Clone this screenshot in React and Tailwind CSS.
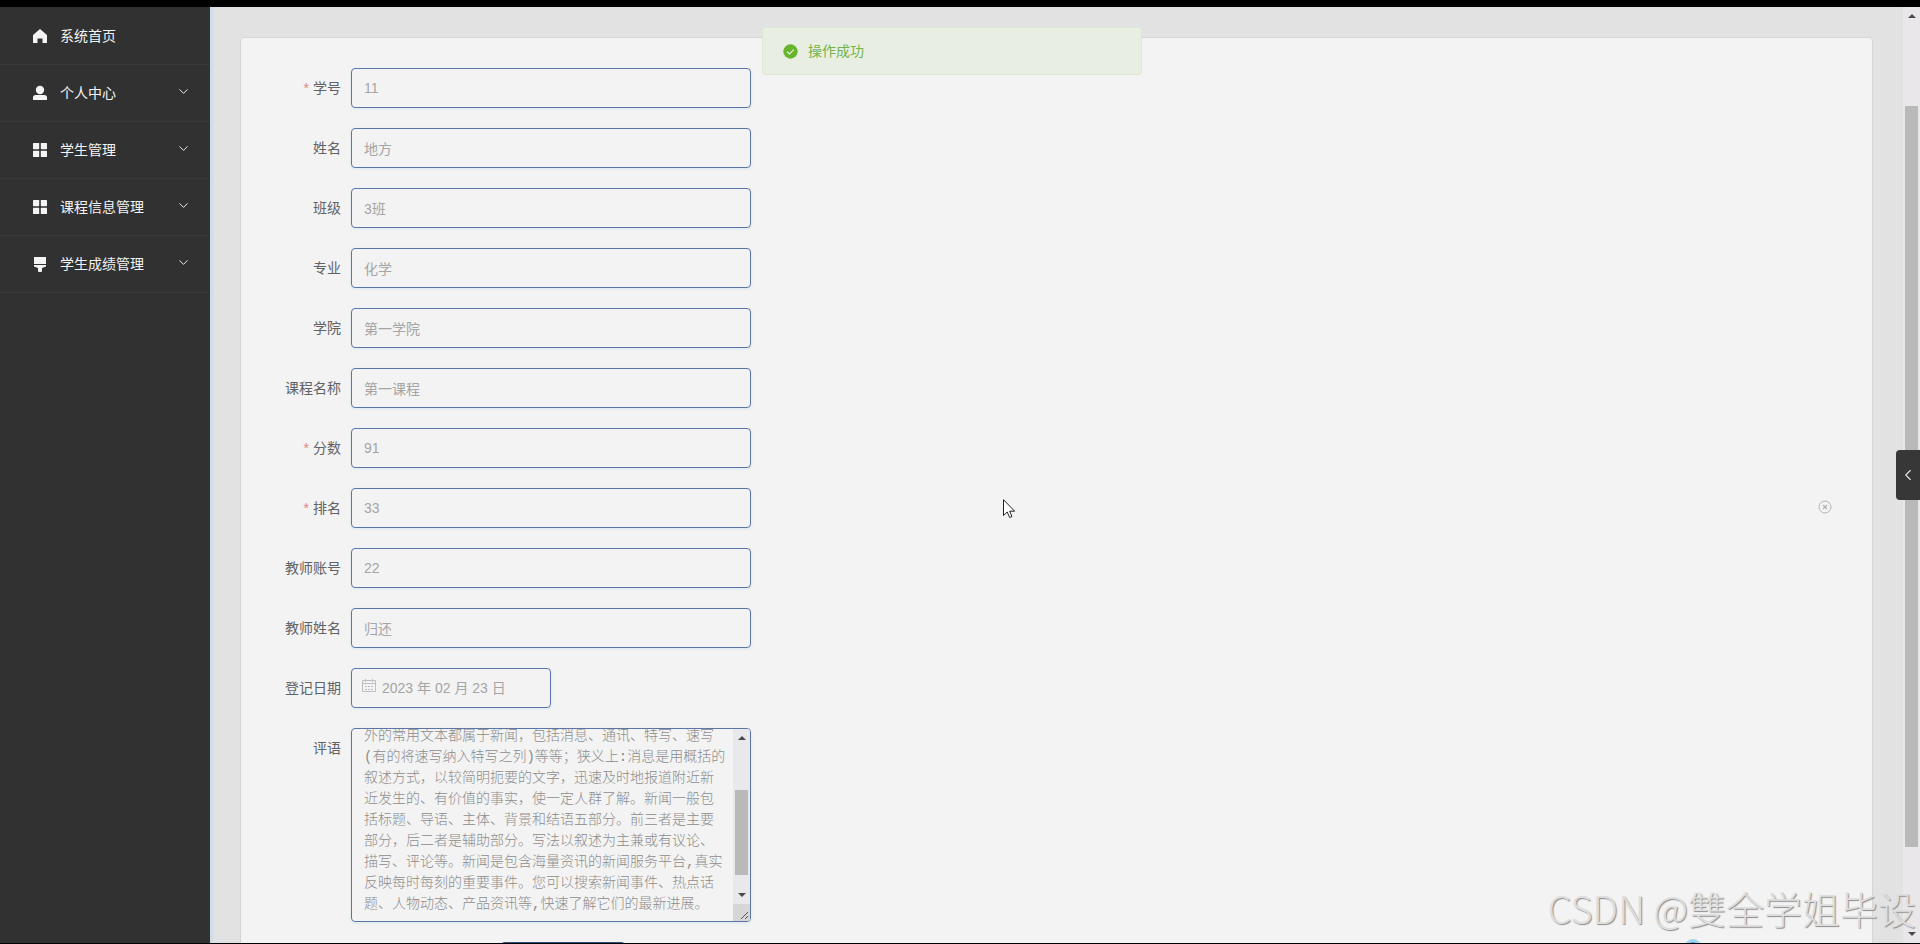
import React from "react";
import { FiChevronDown, FiChevronLeft } from "react-icons/fi";

const menu = [
  { nome: "系统首页", icon: "home" },
  { nome: "个人中心", icon: "user", sub: true },
  { nome: "学生管理", icon: "grid", sub: true },
  { nome: "课程信息管理", icon: "grid", sub: true },
  { nome: "学生成绩管理", icon: "brush", sub: true },
];

const fields = [
  { id: "xuehao", label: "学号", value: "11", required: true },
  { id: "xingming", label: "姓名", value: "地方" },
  { id: "banji", label: "班级", value: "3班" },
  { id: "zhuanye", label: "专业", value: "化学" },
  { id: "xueyuan", label: "学院", value: "第一学院" },
  { id: "kecheng", label: "课程名称", value: "第一课程" },
  { id: "fenshu", label: "分数", value: "91", required: true },
  { id: "paiming", label: "排名", value: "33", required: true },
  { id: "jiaoshizhanghao", label: "教师账号", value: "22" },
  { id: "jiaoshixingming", label: "教师姓名", value: "归还" },
];

const comment = [
  "外的常用文本都属于新闻，包括消息、通讯、特写、速写",
  "(有的将速写纳入特写之列)等等；狭义上:消息是用概括的",
  "叙述方式，以较简明扼要的文字，迅速及时地报道附近新",
  "近发生的、有价值的事实，使一定人群了解。新闻一般包",
  "括标题、导语、主体、背景和结语五部分。前三者是主要",
  "部分，后二者是辅助部分。写法以叙述为主兼或有议论、",
  "描写、评论等。新闻是包含海量资讯的新闻服务平台,真实",
  "反映每时每刻的重要事件。您可以搜索新闻事件、热点话",
  "题、人物动态、产品资讯等,快速了解它们的最新进展。",
].join("\n");

const icons = {
  home: <path d="M8 1 15 7v8h-4.500v-4.500h-5V15H1V7z" />,
  user: (
    <>
      <circle cx="8" cy="5" r="4.200" />
      <path d="M1 15v-2.500C1 11 2 10 3.500 10h9c1.500 0 2.500 1 2.500 2.500V15z" />
    </>
  ),
  grid: (
    <>
      <rect x="1" y="1" width="6.200" height="6.200" rx=".6" />
      <rect x="8.800" y="1" width="6.200" height="6.200" rx=".6" />
      <rect x="1" y="8.800" width="6.200" height="6.200" rx=".6" />
      <rect x="8.800" y="8.800" width="6.200" height="6.200" rx=".6" />
    </>
  ),
  brush: (
    <>
      <path d="M2 1h12v7H2z" />
      <path d="M2 9h12v1.500L10 12v3q0 1-1 1H7q-1 0-1-1v-3l-4-1.500z" />
    </>
  ),
};

const Arrow = ({ down }) => (
  <svg width="8" height="4" viewBox="0 0 8 4" fill="#4a4a4a" className="shrink-0">
    <path d={down ? "M0 0h8L4 4z" : "M4 0l4 4H0z"} />
  </svg>
);

const Sidebar = () => (
  <nav className="w-[210px] shrink-0 pt-px bg-[#323132] text-[#f4f4f4]">
    {menu.map((item) => (
      <a
        key={item.nome}
        href="#"
        className="flex items-center h-[57px] pl-8 pr-[19px] border-b border-[#39383b] text-sm"
      >
        <svg width="16" height="16" viewBox="0 0 16 16" fill="currentColor" className="mr-3">
          {icons[item.icon]}
        </svg>
        <span className="flex-1">{item.nome}</span>
        {item.sub && <FiChevronDown size={15} strokeWidth={1.5} className="mb-1" />}
      </a>
    ))}
  </nav>
);

const FormItem = ({ id, label, required, children }) => (
  <div className="flex mb-5">
    <label
      htmlFor={id}
      className="w-20 shrink-0 pr-[10px] text-right leading-10 whitespace-nowrap text-[#606266]"
    >
      {required && <span className="mr-1 text-[#e08484]">*</span>}
      {label}
    </label>
    {children}
  </div>
);

const ScoreForm = () => (
  <form className="text-sm">
    {fields.map((f) => (
      <FormItem key={f.id} {...f}>
        <input
          id={f.id}
          type="text"
          readOnly
          defaultValue={f.value}
          className="w-[400px] h-10 px-3 rounded border border-[#5c74a6] text-[#a5a5a5] shadow-[0_1px_3px_#d6e6f2] outline-none"
        />
      </FormItem>
    ))}

    <FormItem id="riqi" label="登记日期">
      <div className="flex items-center gap-[6px] w-[200px] h-10 pl-[10px] rounded border border-[#5c74a6] shadow-[0_1px_3px_#d6e6f2]">
        <svg width="14" height="14" viewBox="0 0 14 14" fill="none" stroke="#bdbdc2" className="shrink-0 mb-1">
          <path d="M.5 1.500h13v11H.5zM.5 4.500h13M3.500 0v3M10.500 0v3" />
          <path d="M3 7.500h2M6 7.500h2M9 7.500h2M3 10.500h2M6 10.500h2M9 10.500h2" />
        </svg>
        <input
          id="riqi"
          type="text"
          readOnly
          defaultValue="2023 年 02 月 23 日"
          className="min-w-0 flex-1 text-[#a5a5a5] outline-none"
        />
      </div>
    </FormItem>

    <FormItem id="pingyu" label="评语">
      <div className="flex w-[400px] h-[194px] rounded border border-[#5c74a6] overflow-hidden shadow-[0_1px_3px_#d6e6f2]">
        <textarea
          id="pingyu"
          readOnly
          defaultValue={comment}
          ref={(el) => {
            if (el) el.scrollTop = el.scrollHeight;
          }}
          className="flex-1 min-w-0 pl-3 pt-[5px] pb-[6px] resize-none overflow-hidden whitespace-pre leading-[21px] font-light text-[#8c8c8c] outline-none font-['Liberation_Mono','Noto_Sans_CJK_SC',monospace]"
        />
        <div className="flex flex-col w-[17px] bg-[#e9e8ea]">
          <div className="flex flex-col flex-1 items-center pt-[7px] pb-[7px]">
            <Arrow />
            <div className="w-[13px] h-[85px] mt-[50px] mb-auto bg-[#b9b9b9]" />
            <Arrow down />
          </div>
          <svg width="17" height="17" viewBox="0 0 17 17" stroke="#555" className="bg-[#d6d6d6]">
            <path d="M8 15l7-7M12 15l3-3" />
          </svg>
        </div>
      </div>
    </FormItem>

    <button
      type="button"
      aria-label="返回"
      className="block w-[124px] h-10 ml-[230px] rounded-sm bg-[#2f5078]"
    />
  </form>
);

const Message = () => (
  <div
    role="alert"
    className="absolute top-[27px] left-[762px] flex items-center gap-[10px] w-[380px] h-12 pl-5 rounded border border-[#dce9d6] bg-[#e8efe2] text-sm text-[#74b34c]"
  >
    <svg width="15" height="15" viewBox="0 0 15 15">
      <circle cx="7.500" cy="7.500" r="7.200" fill="#67b52f" />
      <path d="M4.200 7.700l2.300 2.200 4.300-4.300" fill="none" stroke="#e8efe2" strokeWidth="1.300" />
    </svg>
    操作成功
  </div>
);

const App = () => {
  return (
    <div className="relative flex flex-col h-screen overflow-hidden bg-black font-['Liberation_Sans','Noto_Sans_CJK_SC',sans-serif]">
      <div className="flex flex-1 min-h-0 mt-[7px] mb-px">
        <Sidebar />
        <main className="flex-1 min-w-0 overflow-hidden pt-[30px] px-[30px] bg-[#e2e2e2] shadow-[inset_3px_0_2px_#cfdcea]">
          <div className="p-[30px] rounded border border-[#d6d6d6] bg-[#f3f3f3]">
            <ScoreForm />
          </div>
        </main>
        <div className="flex flex-col items-center w-[17px] shrink-0 py-[7px] bg-[#e9e7ea]">
          <Arrow />
          <div className="w-[13px] h-[741px] mt-[88px] mb-auto bg-[#b9b9b9]" />
          <Arrow down />
        </div>
      </div>

      <Message />

      {/* drawer handle */}
      <button
        type="button"
        aria-label="展开"
        className="absolute right-0 top-[450px] flex items-center justify-center w-6 h-[50px] rounded-l-sm bg-[#373737] text-[#e6e6e6]"
      >
        <FiChevronLeft size={18} strokeWidth={1.5} />
      </button>

      <svg
        width="14"
        height="14"
        viewBox="0 0 14 14"
        fill="none"
        stroke="#b4b4b4"
        className="absolute right-[88px] top-[500px]"
      >
        <circle cx="7" cy="7" r="6" />
        <path d="M5 5l4 4M9 5l-4 4" strokeWidth="1.300" />
      </svg>

      {/* mouse pointer */}
      <svg
        width="13"
        height="20"
        viewBox="0 0 13 20"
        fill="#fff"
        stroke="#222"
        className="absolute left-[1003px] top-[499px]"
      >
        <path d="M.5.7v15.800l3.700-3.500 2.500 5.500 2.300-1-2.400-5.300h5z" />
      </svg>

      <svg width="16" height="4" viewBox="0 0 16 4" className="absolute right-[219px] bottom-px">
        <circle cx="8" cy="8" r="8" fill="#a3d2f2" />
        <circle cx="8" cy="6" r="3" fill="#3f9fe0" />
      </svg>

      <div className="absolute right-1 bottom-2 text-[38px] leading-[56px] font-light whitespace-nowrap text-[#dedede] [text-shadow:1px_1px_1px_#8c8c8c] font-['Noto_Sans_CJK_SC',sans-serif]">
        CSDN @雙全学姐毕设
      </div>
    </div>
  );
};

export default App;
